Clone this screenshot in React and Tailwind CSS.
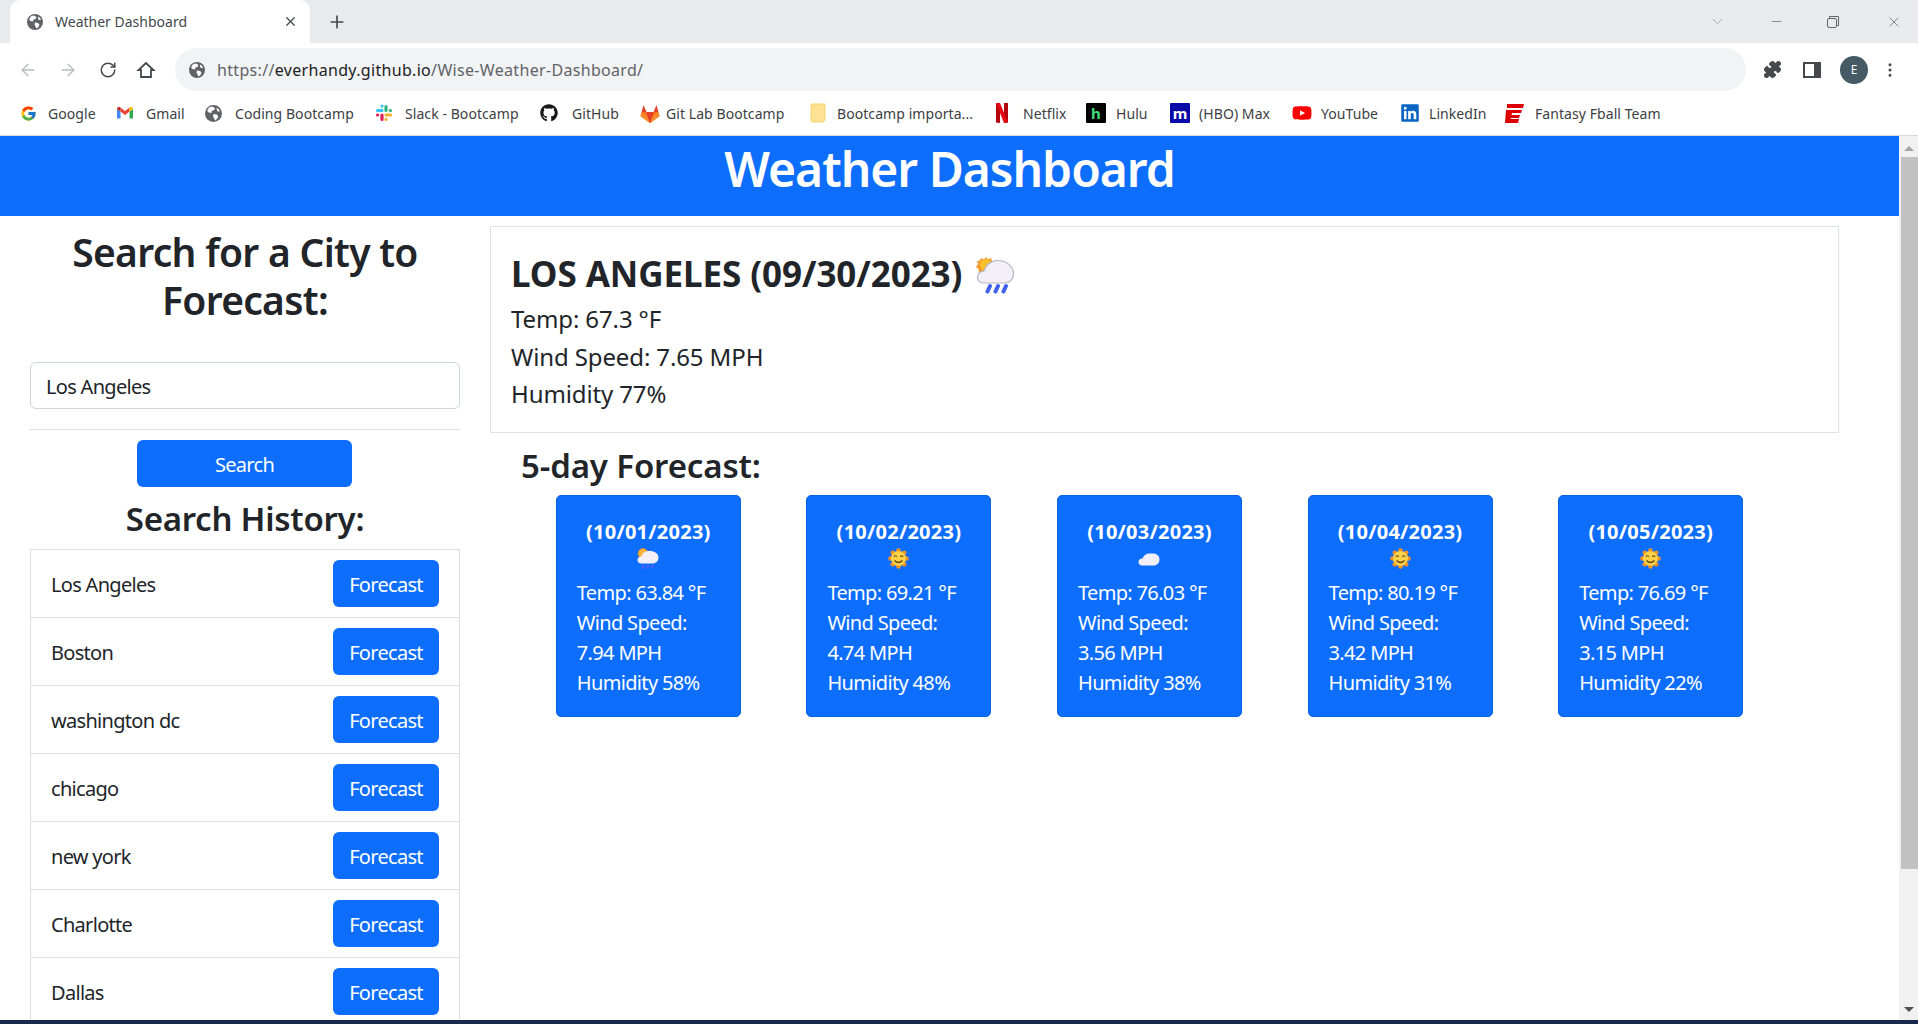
import React from "react";
import { ArrowLeft, ArrowRight, RotateCw, Plus, X, Minus, ChevronDown, EllipsisVertical, Puzzle } from "lucide-react";
import { FaGithub, FaLinkedin, FaYoutube } from "react-icons/fa";
import { FcGoogle } from "react-icons/fc";

const Globe = ({ c = "#5f6368", s = 16 }) => (
  <svg width={s} height={s} viewBox="0 0 16 16" className="shrink-0">
    <circle cx="8" cy="8" r="8" fill={c} />
    <path d="M4 2.200 7 1.500 9.500 3 8.500 5 6.500 5.500 6 7.500 3.500 7 2 5.500ZM8 8.500l3 .5 1.500 1.500-1 2.500-2 1.500-1-2-1-2ZM11 2.500l2 1.500 1 2-2 0-1-1.500Z" fill="#fff" />
  </svg>
);
const Gmail = () => (
  <svg width="16" height="16" viewBox="0 0 16 16" className="shrink-0">
    <path d="M0 4v9.500h3.500V6.500Z" fill="#4285f4" />
    <path d="M16 4v9.500h-3.500V6.500Z" fill="#34a853" />
    <path d="M3.500 6.500 8 10l4.500-3.500V2.500L8 6 3.500 2.500Z" fill="#ea4335" />
    <path d="M0 4c0-1.600 2-2.400 3.500-1.500v4Z" fill="#c5221f" />
    <path d="M16 4c0-1.600-2-2.400-3.500-1.500v4Z" fill="#fbbc04" />
  </svg>
);
const Slack = () => (
  <svg width="18" height="18" viewBox="0 0 18 18" className="shrink-0">
    <g strokeLinecap="round" strokeWidth="3.200" fill="none">
      <path d="M7 2 7 2.100M7 6.500H2.500" stroke="#36c5f0" />
      <path d="M11 2.500V6.500M15.500 6.500 15.400 6.500" stroke="#2eb67d" />
      <path d="M15.500 11H11M11 15.500 11 15.400" stroke="#ecb22e" />
      <path d="M7 15.500V11M2.500 11 2.600 11" stroke="#e01e5a" />
    </g>
  </svg>
);
const GitLab = () => (
  <svg width="20" height="19" viewBox="0 0 20 19" className="shrink-0">
    <path d="M10 19 0.500 12 3.500 1l3 7h7l3-7 3 11Z" fill="#e24329" />
    <path d="M10 19 0.500 12 2 8h4.500Z" fill="#fc6d26" />
    <path d="M10 19l9.500-7L18 8h-4.500Z" fill="#fc6d26" />
    <path d="M10 19 6.500 8h7Z" fill="#e24329" />
    <path d="M0.500 12 10 19 4 14.500Z" fill="#fca326" />
    <path d="M2 8 0.500 12 5 15.500 10 19 6.500 12Z" fill="#fca326" opacity="0.6" />
    <path d="M18 8l1.500 4L15 15.500 10 19l3.500-7Z" fill="#fca326" opacity="0.6" />
  </svg>
);
const Folder = () => (
  <svg width="16" height="20" viewBox="0 0 16 20" className="shrink-0">
    <path d="M1 1h14v16l-2 2H2l-1-1Z" fill="#fde293" stroke="#f6d46a" />
  </svg>
);
const Netflix = () => (
  <svg width="14" height="20" viewBox="0 0 14 20" className="shrink-0">
    <path d="M1 0h4v20l-4-.5ZM9 0h4v19.500L9 20Z" fill="#b1060f" />
    <path d="M1 0h4l8 19.500L9 20Z" fill="#e50914" />
  </svg>
);
const HouseIcon = () => (
  <svg width="20" height="20" viewBox="0 0 20 20" className="ml-[19px] shrink-0">
    <path d="M10 3 2.500 10H5v7h10v-7h2.500Z" fill="none" stroke="#45494e" strokeWidth="1.800" strokeLinejoin="miter" />
  </svg>
);
const RestoreIcon = () => (
  <svg width="14" height="14" viewBox="0 0 14 14" className="ml-[42px] shrink-0">
    <path d="M3.500 3V1.500h9v9H11" fill="none" stroke="#666" />
    <rect x="1.500" y="3.500" width="9" height="9" rx="1.500" fill="none" stroke="#666" />
  </svg>
);
const Tile = ({ bg, fg, t }) => (
  <span className={`flex h-5 w-5 shrink-0 items-center justify-center rounded-[1px] text-[15px] leading-none font-bold ${bg} ${fg}`}>{t}</span>
);
const Espn = () => (
  <svg width="20" height="20" viewBox="0 0 20 20" className="shrink-0">
    <path d="M2 1h17l-1 4H2ZM1 7h16l-1 3H7l-.5 2H15l-1 3H6l-.5 1H14l-1 4H0Z" fill="#d00" />
  </svg>
);

const bookmarks = [
  { l: "Google", w: "w-[97px]", g: "gap-[11px]", i: <FcGoogle size={17} className="shrink-0" /> },
  { l: "Gmail", w: "w-[88px]", g: "gap-[13px]", i: <Gmail /> },
  { l: "Coding Bootcamp", w: "w-[170px]", g: "gap-[13px]", i: <Globe s={17} /> },
  { l: "Slack - Bootcamp", w: "w-[165px]", g: "gap-[12px]", i: <Slack /> },
  { l: "GitHub", w: "w-[100px]", g: "gap-[14px]", i: <FaGithub size={18} color="#181717" className="shrink-0" /> },
  { l: "Git Lab Bootcamp", w: "w-[170px]", g: "gap-[6px]", i: <GitLab /> },
  { l: "Bootcamp importa...", w: "w-[185px]", g: "gap-[11px]", i: <Folder /> },
  { l: "Netflix", w: "w-[91px]", g: "gap-[14px]", i: <Netflix /> },
  { l: "Hulu", w: "w-[84px]", g: "gap-[10px]", i: <Tile bg="bg-black" fg="text-[#3dde7a]" t="h" /> },
  { l: "(HBO) Max", w: "w-[122px]", g: "gap-[9px]", i: <Tile bg="bg-[#0a0aa8]" fg="text-white" t="m" /> },
  { l: "YouTube", w: "w-[108px]", g: "gap-[9px]", i: <FaYoutube size={20} color="#f00" className="shrink-0" /> },
  { l: "LinkedIn", w: "w-[105px]", g: "gap-[9px]", i: <FaLinkedin size={20} color="#0a66c2" className="shrink-0" /> },
  { l: "Fantasy Fball Team", w: "w-[160px]", g: "gap-[10px]", i: <Espn /> },
];

const CloudRain = ({ s }) => (
  <svg width={s} height={s} viewBox="0 0 40 40" className="shrink-0">
    <path d="M10 3 12 5.500 15 4 16 7l3 .5-1 3-8 8-7-.5-.5-3L0 13l2-3-1-3 3-.5L5 4l3 1.500Z" fill="#f29a2e" />
    <circle cx="10" cy="11" r="6" fill="#fbc02d" />
    <path d="M8 29C4 29 1.500 26.500 1.500 23c0-3.500 3-6 6.500-6 1.500-6 7-10.500 14-10.500 8.500 0 15.500 6 15.500 13 0 5.500-3.500 9.500-9 9.500Z" fill="#f3eff9" stroke="#b7b3c2" strokeWidth="1.200" />
    <path d="M14 32l-2.500 5.500M22 32l-2.500 5.500M30 32l-2.500 5.500" stroke="#3f5ef0" strokeWidth="4" strokeLinecap="round" />
  </svg>
);
const Sun = () => (
  <svg width="21" height="21" viewBox="0 0 21 21" className="shrink-0">
    <g fill="#f4901f">
      <circle cx="10.500" cy="2.500" r="2.300" />
      <circle cx="10.500" cy="18.500" r="2.300" />
      <circle cx="2.500" cy="10.500" r="2.300" />
      <circle cx="18.500" cy="10.500" r="2.300" />
      <circle cx="4.800" cy="4.800" r="2.300" />
      <circle cx="16.200" cy="4.800" r="2.300" />
      <circle cx="4.800" cy="16.200" r="2.300" />
      <circle cx="16.200" cy="16.200" r="2.300" />
    </g>
    <circle cx="10.500" cy="10.500" r="7.500" fill="#fdd247" />
    <path d="M5.800 8.800q1.500-2 3 0M12.200 8.800q1.500-2 3 0" fill="none" stroke="#6b5320" strokeWidth="1.100" />
    <path d="M6.500 12.500q4 4 8 0" fill="none" stroke="#6b3f13" strokeWidth="1.300" />
  </svg>
);
const CloudSmall = () => (
  <svg width="22" height="22" viewBox="0 0 22 22" className="shrink-0">
    <path d="M4.500 17.500c-2.500 0-4-1.500-4-3.500s1.500-3.500 4-3.500c1-3 3.500-5 7-5H15c4 0 6.500 2.500 6.500 6s-2.500 6-6 6Z" fill="#f3eff9" />
  </svg>
);
const CloudSunSmall = () => (
  <svg width="22" height="21" viewBox="0 0 22 21" className="shrink-0">
    <circle cx="6" cy="5.500" r="4.800" fill="#f7b23b" stroke="#f4901f" />
    <path d="M4.500 15.500c-2.500 0-4-1.500-4-3.500s1.500-3.500 4-3.500c.7-3.300 3.800-5.500 8-5.500 5 0 9 2.500 9 6.500 0 3.500-2.500 6-6 6Z" fill="#f3eff9" />
    <path d="M7 17l-1.300 3.500M11.500 17l-1.300 3.500M16 17l-1.300 3.500" stroke="#5f5cf5" strokeWidth="1.800" />
  </svg>
);

const days = [
  { d: "(10/01/2023)", i: <CloudSunSmall />, t: "63.84", w: "7.94", h: "58" },
  { d: "(10/02/2023)", i: <Sun />, t: "69.21", w: "4.74", h: "48" },
  { d: "(10/03/2023)", i: <CloudSmall />, t: "76.03", w: "3.56", h: "38" },
  { d: "(10/04/2023)", i: <Sun />, t: "80.19", w: "3.42", h: "31" },
  { d: "(10/05/2023)", i: <Sun />, t: "76.69", w: "3.15", h: "22" },
];
const cities = ["Los Angeles", "Boston", "washington dc", "chicago", "new york", "Charlotte", "Dallas"];

export default function App() {
  return (
    <div className="flex h-[1024px] w-[1918px] flex-col overflow-hidden bg-white font-['Noto_Sans','Open_Sans',sans-serif] text-[#212529]">
      {/* tab strip */}
      <div className="flex h-[43px] shrink-0 items-center bg-[#e8eaed] pl-[10px]">
        <div className="flex h-[43px] w-[300px] items-center rounded-t-[10px] bg-white pl-[17px] pr-[12px] text-[#45494e]">
          <Globe />
          <span className="ml-[12px] flex-1 text-[14px]">Weather Dashboard</span>
          <X size={15} strokeWidth={2} className="text-[#45494e]" />
        </div>
        <Plus size={20} strokeWidth={2} className="ml-[17px] text-[#45494e]" />
        <div className="flex-1" />
        <ChevronDown size={17} strokeWidth={1} className="text-[#8a8c90]" />
        <Minus size={15} strokeWidth={1} className="ml-[43px] text-[#555]" />
        <RestoreIcon />
        <X size={16} strokeWidth={1} className="ml-[46px] mr-[16px] text-[#555]" />
      </div>
      {/* toolbar */}
      <div className="flex h-[53px] shrink-0 items-start bg-white pl-[18px] pt-[5px]">
        <div className="flex h-[43px] items-center">
          <ArrowLeft size={20} strokeWidth={1.6} className="text-[#b9bbbf]" />
          <ArrowRight size={20} strokeWidth={1.6} className="ml-[20px] text-[#b9bbbf]" />
          <RotateCw size={18} strokeWidth={2} className="ml-[21px] text-[#45494e]" />
          <HouseIcon />
        </div>
        <div className="ml-[19px] flex h-[43px] w-[1571px] items-center rounded-full bg-[#f1f3f4] pl-[14px]">
          <Globe />
          <span className="ml-[12px] text-[16px] tracking-[0.02em] text-[#5f6368]">
            https://<span className="text-[#202124]">everhandy.github.io</span>/Wise-Weather-Dashboard/
          </span>
        </div>
        <div className="flex h-[43px] flex-1 items-center">
          <Puzzle size={19} fill="#45494e" strokeWidth={1.5} className="ml-[17px] text-[#45494e]" />
          <span className="ml-[21px] flex h-[16px] w-[18px] justify-end border-2 border-[#45494e]">
            <span className="h-full w-[5px] bg-[#45494e]" />
          </span>
          <span className="ml-[19px] flex h-[28px] w-[28px] items-center justify-center rounded-full bg-[#455a64] text-[12px] text-white">E</span>
          <EllipsisVertical size={18} className="ml-[13px] text-[#45494e]" />
        </div>
      </div>
      {/* bookmarks */}
      <div className="flex h-[40px] shrink-0 items-center border-b border-[#d8d9da] bg-white pb-[5px] pl-[20px] text-[14px] text-[#3c4043]">
        {bookmarks.map((b) => (
          <div key={b.l} className={`flex shrink-0 items-center ${b.w} ${b.g}`}>
            {b.i}
            <span className="whitespace-nowrap tracking-[0.005em]">{b.l}</span>
          </div>
        ))}
      </div>
      {/* viewport */}
      <div className="flex min-h-0 flex-1">
        <div className="min-w-0 flex-1 overflow-hidden">
          <div className="flex h-[80px] items-center justify-center bg-[#0d6efd] pb-[14px] text-[48px] font-semibold tracking-[-0.021em] text-white">
            Weather Dashboard
          </div>
          <div className="flex">
            {/* left */}
            <div className="w-[490px] shrink-0 pl-[30px] pr-[30px] pt-[12px]">
              <h2 className="text-center text-[39px] leading-[48px] font-semibold tracking-[-0.018em]">Search for a City to Forecast:</h2>
              <div className="mt-[38px] flex h-[47px] items-center rounded-[6px] border border-[#ced4da] px-[15px] pt-[2px] text-[20px] tracking-[-0.035em] text-[#212529]">Los Angeles</div>
              <div className="mt-[20px] h-px bg-[#dfdfdf]" />
              <div className="mt-[10px] flex justify-center pr-[1px]">
                <button className="h-[47px] w-[215px] rounded-[6px] bg-[#0d6efd] pt-[2px] text-[20px] tracking-[-0.035em] text-white">Search</button>
              </div>
              <h3 className="mt-[11px] mb-[9px] text-center text-[33px] leading-[42px] font-semibold tracking-[-0.008em]">Search History:</h3>
              <ul className="border border-[#dfdfdf]">
                {cities.map((c) => (
                  <li key={c} className="flex h-[68px] items-center justify-between border-b border-[#dfdfdf] pl-[20px] pr-[20px] text-[20px] tracking-[-0.035em]">
                    <span className="pt-[2px]">{c}</span>
                    <button className="h-[47px] w-[106px] rounded-[6px] bg-[#0d6efd] pt-[2px] text-[20px] tracking-[-0.035em] text-white">Forecast</button>
                  </li>
                ))}
              </ul>
            </div>
            {/* right */}
            <div className="w-[1349px] shrink-0 pt-[10px]">
              <div className="h-[207px] border border-[#dee2e6] pl-[20px] pt-[25px]">
                <div className="flex h-[44px] items-center text-[35px] font-bold tracking-[-0.002em]">
                  LOS ANGELES (09/30/2023)
                  <span className="ml-[14px]"><CloudRain s={40} /></span>
                </div>
                <p className="mt-[4px] text-[24px] leading-[38px] tracking-[-0.005em]">Temp: 67.3 °F</p>
                <p className="text-[24px] leading-[37px] tracking-[-0.005em]">Wind Speed: 7.65 MPH</p>
                <p className="text-[24px] leading-[38px] tracking-[-0.005em]">Humidity 77%</p>
              </div>
              <h3 className="mt-[12px] pl-[31px] text-[33px] leading-[42px] font-semibold tracking-[-0.004em]">5-day Forecast:</h3>
              <div className="mt-[8px] ml-[33px] flex w-[1253px] justify-around">
                {days.map((d) => (
                  <div key={d.d} className="h-[222px] w-[185px] rounded-[5px] border border-[#0b62e0] bg-[#0d6efd] pl-[20px] pt-[21px] text-[20px] leading-[30px] tracking-[-0.033em] text-white">
                    <div className="pr-[20px] text-center font-bold tracking-[0.012em] whitespace-nowrap">{d.d}</div>
                    <div className="flex h-[24px] justify-center pr-[20px] pt-[1px]">{d.i}</div>
                    <div className="mt-[7px]">Temp: {d.t} °F</div>
                    <div>Wind Speed:</div>
                    <div>{d.w} MPH</div>
                    <div>Humidity {d.h}%</div>
                  </div>
                ))}
              </div>
            </div>
          </div>
        </div>
        {/* scrollbar */}
        <div className="flex w-[19px] shrink-0 flex-col items-end bg-[#f1f1f1]">
          <div className="flex h-[21px] w-full items-center justify-center pt-[3px]">
            <span className="h-0 w-0 border-x-[5px] border-b-[5px] border-x-transparent border-b-[#a3a3a3]" />
          </div>
          <div className="h-[712px] w-[17px] bg-[#c1c1c1]" />
          <div className="flex-1" />
          <div className="flex h-[21px] w-full items-center justify-center">
            <span className="h-0 w-0 border-x-[5px] border-t-[5px] border-x-transparent border-t-[#505050]" />
          </div>
        </div>
      </div>
      <div className="h-[4px] shrink-0 bg-[#16294b]" />
    </div>
  );
}
